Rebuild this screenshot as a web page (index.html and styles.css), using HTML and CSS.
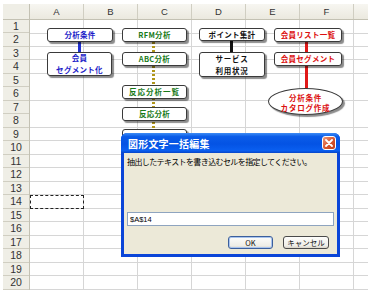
FILE: index.html
```
<!doctype html>
<html lang="ja">
  <head>
    <meta charset="utf-8">
    <title>図形文字一括編集</title>
    <link rel="stylesheet" href="styles.css">
  </head>
  <body>
    <div class="sheet">
      <div class="corner"></div>
      <div class="col-heads">
        <div class="col-head">A</div>
        <div class="col-head">B</div>
        <div class="col-head">C</div>
        <div class="col-head">D</div>
        <div class="col-head">E</div>
        <div class="col-head">F</div>
        <div class="col-head part"></div>
      </div>
      <div class="row-heads">
        <div class="row-head">1</div>
        <div class="row-head">2</div>
        <div class="row-head">3</div>
        <div class="row-head">4</div>
        <div class="row-head">5</div>
        <div class="row-head">6</div>
        <div class="row-head">7</div>
        <div class="row-head">8</div>
        <div class="row-head">9</div>
        <div class="row-head">10</div>
        <div class="row-head">11</div>
        <div class="row-head">12</div>
        <div class="row-head">13</div>
        <div class="row-head">14</div>
        <div class="row-head">15</div>
        <div class="row-head">16</div>
        <div class="row-head">17</div>
        <div class="row-head">18</div>
        <div class="row-head">19</div>
        <div class="row-head">20</div>
      </div>
      <div class="cells">
        <!-- connectors sit under the shapes -->
        <div class="link link-blue"></div>
        <div class="link link-dots"></div>
        <div class="link link-black"></div>
        <div class="link link-red"></div>

        <div class="box blue b-jouken">分析条件</div>
        <div class="box blue b-segment">会員<br>セグメント化</div>

        <div class="box green b-rfm">RFM分析</div>
        <div class="box green b-abc">ABC分析</div>
        <div class="box green b-hanno-list">反応分析一覧</div>
        <div class="box green b-hanno">反応分析</div>
        <div class="box green b-hidden"></div>

        <div class="box black b-point">ポイント集計</div>
        <div class="box black b-service">サービス<br>利用状況</div>

        <div class="box red b-list">会員リスト一覧</div>
        <div class="box red b-member-seg">会員セグメント</div>
        <div class="box red oval b-catalog">分析条件<br>カタログ作成</div>

        <div class="selection"></div>
      </div>
    </div>

    <div class="dialog">
      <div class="dialog-title">
        <span>図形文字一括編集</span>
        <span class="close-btn">
          <svg width="8" height="8" viewBox="0 0 8 8"><path d="M1 1L7 7M7 1L1 7" stroke="#fff" stroke-width="1.8" stroke-linecap="round"/></svg>
        </span>
      </div>
      <div class="dialog-body">
        <p class="prompt">抽出したテキストを書き込むセルを指定してください。</p>
        <div class="ref-input">$A$14</div>
        <div class="buttons">
          <div class="btn btn-default">OK</div>
          <div class="btn">キャンセル</div>
        </div>
      </div>
    </div>
  </body>
</html>
```
FILE: styles.css
```
body {
  margin: 0;
  background: #fff;
  font-family: "Liberation Sans", "Noto Sans CJK JP", sans-serif;
}

/* worksheet */
.sheet {
  display: grid;
  grid-template-columns: 27px 338px;
  grid-template-rows: 15.5px 270px;
  margin: 4px 0 0 3px;
}

.corner {
  background: #efeee6;
  border-right: 1px solid #c3c1b3;
  border-bottom: 1px solid #c3c1b3;
  box-sizing: border-box;
}

.col-heads {
  display: flex;
  background: linear-gradient(#f7f6f1, #ebe9df);
  border-bottom: 1px solid #c3c1b3;
  box-sizing: border-box;
}

.col-head {
  width: 54px;
  flex: none;
  border-right: 1px solid #d0cec2;
  box-sizing: border-box;
  display: flex;
  align-items: center;
  justify-content: center;
  font-size: 9.5px;
  color: #333;
}
.col-head.part { width: 14px; border-right: 0; }

.row-heads {
  display: flex;
  flex-direction: column;
  background: #efeee6;
  border-right: 1px solid #c3c1b3;
  box-sizing: border-box;
}

.row-head {
  height: 13.5px;
  flex: none;
  border-bottom: 1px solid #d0cec2;
  box-sizing: border-box;
  display: flex;
  align-items: center;
  justify-content: center;
  font-size: 10.5px;
  color: #333;
}

.cells {
  position: relative;
  background-color: #fff;
  background-image:
    repeating-linear-gradient(to right, transparent 0 53px, #d6d6d6 53px 54px),
    repeating-linear-gradient(to bottom, transparent 0 12.5px, #d6d6d6 12.5px 13.5px);
}

/* shapes floating on the sheet */
.box {
  position: absolute;
  box-sizing: border-box;
  background: #fff;
  border: 1.5px solid #3a3a3a;
  border-radius: 3px;
  box-shadow: 2px 2px 1px rgba(0, 0, 0, 0.45);
  display: flex;
  align-items: center;
  justify-content: center;
  text-align: center;
  font: bold 7.5px/11.5px "Noto Sans CJK JP", sans-serif;
  letter-spacing: 0.3px;
}
.box.blue { color: #1c1cc8; }
.box.green { color: #187a18; }
.box.black { color: #111; }
.box.red { color: #dc1010; }
.box.oval { border-radius: 50%; line-height: 10.5px; padding-top: 3px; }

.b-jouken { left: 17px; top: 8.5px; width: 66px; height: 14px; }
.b-segment { left: 17px; top: 32.5px; width: 65px; height: 23.5px; }

.b-rfm { left: 92px; top: 8.5px; width: 65px; height: 14px; }
.b-abc { left: 92px; top: 32.5px; width: 65px; height: 13.5px; }
.b-hanno-list { left: 92px; top: 65.5px; width: 65px; height: 13.5px; letter-spacing: 1px; }
.b-hanno { left: 92px; top: 87.5px; width: 65px; height: 13.5px; }
.b-hidden { left: 92px; top: 109.5px; width: 65px; height: 13.5px; }

.b-point { left: 169px; top: 8px; width: 66px; height: 13.5px; }
.b-service { left: 169px; top: 32.5px; width: 66px; height: 25px; letter-spacing: 0.8px; }

.b-list { left: 244px; top: 8.5px; width: 68px; height: 13.5px; }
.b-member-seg { left: 244px; top: 32.5px; width: 68px; height: 13.5px; }
.b-catalog { left: 238px; top: 68.5px; width: 75px; height: 27px; letter-spacing: 0.8px; }

.link { position: absolute; width: 3px; }
.link-blue { left: 48px; top: 22px; height: 11px; background: #1f2fd0; }
.link-dots {
  left: 122px; top: 22px; height: 90px;
  background: repeating-linear-gradient(to bottom, #b0961a 0 2px, transparent 2px 4px);
}
.link-black { left: 200px; top: 21px; height: 12px; background: #111; }
.link-red { left: 275px; top: 21px; height: 49px; background: #e01818; }

.selection {
  position: absolute;
  left: 0;
  top: 175.5px;
  width: 54px;
  height: 13.5px;
  box-sizing: border-box;
  border: 1.5px dashed #222;
}

/* modal dialog */
.dialog {
  position: absolute;
  left: 121px;
  top: 133px;
  width: 219px;
  height: 124px;
  box-sizing: border-box;
  display: flex;
  flex-direction: column;
  padding: 0 3px 3px;
  background: #0a45d8;
  border-radius: 6px 6px 0 0;
}

.dialog-title {
  height: 20px;
  flex: none;
  margin: 0 -3px;
  padding: 0 4px 0 7px;
  display: flex;
  align-items: center;
  justify-content: space-between;
  border-radius: 6px 6px 0 0;
  background: linear-gradient(#3d8cf5, #0b5ce8 18%, #0453e4 55%, #0a5ff0 88%, #0745c8);
  color: #fff;
  font: bold 10px "Noto Sans CJK JP", sans-serif;
  letter-spacing: 0.2px;
}

.close-btn {
  width: 14px;
  height: 14px;
  box-sizing: border-box;
  border: 1px solid #fff;
  border-radius: 3px;
  background: linear-gradient(135deg, #ee9a7c, #d6532c 55%, #c2401a);
  display: flex;
  align-items: center;
  justify-content: center;
}

.dialog-body {
  flex: 1;
  display: flex;
  flex-direction: column;
  background: #ece9d8;
}

.prompt {
  margin: 4px 0 0 3px;
  font: 8px/10px "Noto Sans CJK JP", sans-serif;
  letter-spacing: -0.6px;
  color: #000;
}

.ref-input {
  height: 14px;
  margin: 45px 3px 0;
  padding-left: 2px;
  box-sizing: border-box;
  display: flex;
  align-items: center;
  background: #fff;
  border: 1px solid #8ea4bf;
  font-size: 7.5px;
  color: #000;
}

.buttons {
  display: flex;
  justify-content: flex-end;
  gap: 10px;
  margin-top: 10px;
  padding-right: 8px;
}

.btn {
  width: 46px;
  height: 13px;
  box-sizing: border-box;
  border: 1px solid #4a4a4a;
  border-radius: 3px;
  background: linear-gradient(#fdfdfb, #eeede7 80%, #d8d3c7);
  display: flex;
  align-items: center;
  justify-content: center;
  font: 7.5px "Noto Sans CJK JP", sans-serif;
  color: #111;
}
.btn-default {
  width: 45px;
  border-color: #3c5f9c;
  box-shadow: inset 0 0 0 1px #a9c4ee;
}
```
